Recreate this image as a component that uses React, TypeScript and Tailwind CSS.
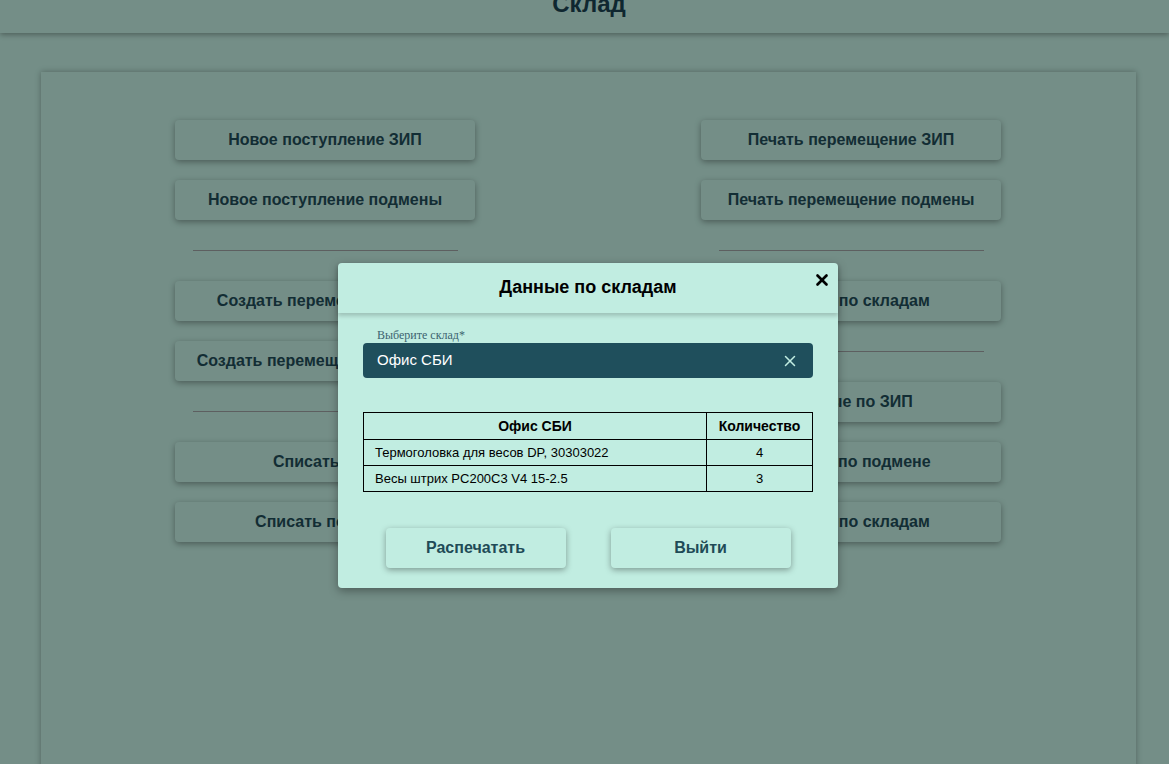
import { X } from 'lucide-react'

const font = { fontFamily: '"Liberation Sans", Arial, sans-serif' }

function MenuButton({ label }: { label: string }) {
  return (
    <button
      type="button"
      className="w-[300px] h-10 rounded-[4px] bg-[#c1ede1] shadow-[0_2px_6px_rgba(0,0,0,0.35)] text-[16px] font-bold text-[#1f4b57]"
    >
      {label}
    </button>
  )
}

function Divider() {
  return <div className="w-[265px] h-px bg-[#9b9fa0] mx-auto" />
}

const rows = [
  { name: 'Термоголовка для весов DP, 30303022', qty: 4 },
  { name: 'Весы штрих PC200C3 V4 15-2.5', qty: 3 },
]

export default function App() {
  return (
    <div className="relative h-[764px] overflow-hidden bg-[#c1ede1]" style={font}>
      {/* Header */}
      <div className="h-[33px] bg-[#c1ede1] shadow-[0_2px_5px_rgba(0,0,0,0.3)] relative z-10 flex justify-center pl-[9px]">
        <h1 className="-mt-[10px] text-[24px] leading-[28px] font-bold text-[#1a4250]">Склад</h1>
      </div>

      {/* Main card */}
      <div className="ml-[41px] mt-[39px] w-[1095px] h-[760px] bg-[#c1ede1] shadow-[0_0_6px_rgba(0,0,0,0.3)] pt-[48px] pl-[134px]">
        <div className="flex gap-[226px]">
          <div className="flex flex-col w-[300px]">
            <MenuButton label="Новое поступление ЗИП" />
            <div className="h-5" />
            <MenuButton label="Новое поступление подмены" />
            <div className="h-[30px]" />
            <Divider />
            <div className="h-[30px]" />
            <MenuButton label="Создать перемещение ЗИП" />
            <div className="h-5" />
            <MenuButton label="Создать перемещение подмены" />
            <div className="h-[30px]" />
            <Divider />
            <div className="h-[30px]" />
            <MenuButton label="Списать ЗИП" />
            <div className="h-5" />
            <MenuButton label="Списать подмену" />
          </div>
          <div className="flex flex-col w-[300px]">
            <MenuButton label="Печать перемещение ЗИП" />
            <div className="h-5" />
            <MenuButton label="Печать перемещение подмены" />
            <div className="h-[30px]" />
            <Divider />
            <div className="h-[30px]" />
            <MenuButton label="Данные по складам" />
            <div className="h-[30px]" />
            <Divider />
            <div className="h-[30px]" />
            <MenuButton label="Данные по ЗИП" />
            <div className="h-5" />
            <MenuButton label="Данные по подмене" />
            <div className="h-5" />
            <MenuButton label="Данные по складам" />
          </div>
        </div>
      </div>

      {/* Backdrop */}
      <div className="absolute inset-0 z-20 bg-black/40" />

      {/* Modal */}
      <div className="absolute z-30 left-[338px] top-[263px] w-[500px] rounded-[4px] bg-[#c1ede1] shadow-[0_3px_10px_rgba(0,0,0,0.35)] pb-5">
        <div className="relative h-[50px] flex items-center justify-center pb-px shadow-[0_3px_4px_rgba(0,0,0,0.18)]">
          <h2 className="text-[18px] font-bold text-black">Данные по складам</h2>
          <span className="absolute right-[7px] top-[8px]">
            <X size={18} strokeWidth={3.5} className="text-black" />
          </span>
        </div>

        <div className="px-[25px]">
          <div
            className="mt-[15px] pl-[14px] text-[12px] leading-[14px] text-[#3c6470]"
            style={{ fontFamily: '"Liberation Serif", "Times New Roman", serif' }}
          >
            Выберите склад*
          </div>
          <div className="mt-px h-[35px] rounded-[4px] bg-[#1f4f5c] flex items-center justify-between pl-[14px] pr-[14px]">
            <span className="text-[15px] text-white">Офис СБИ</span>
            <X size={18} strokeWidth={2} className="text-[#c1ede1]" />
          </div>

          <table className="mt-[34px] w-[450px] border-collapse text-black">
            <thead>
              <tr className="h-[27px]">
                <th className="border border-black text-[14px] font-bold w-[343px]">Офис СБИ</th>
                <th className="border border-black text-[14px] font-bold">Количество</th>
              </tr>
            </thead>
            <tbody>
              {rows.map((r) => (
                <tr key={r.name} className="h-[26px]">
                  <td className="border border-black text-[13px] pl-[11px]">{r.name}</td>
                  <td className="border border-black text-[13px] text-center">{r.qty}</td>
                </tr>
              ))}
            </tbody>
          </table>
        </div>

        <div className="mt-[36px] flex justify-center gap-[45px]">
          <button
            type="button"
            className="w-[180px] h-10 rounded-[4px] bg-[#c1ede1] shadow-[0_2px_6px_rgba(0,0,0,0.35)] text-[16px] font-bold text-[#1f4b57]"
          >
            Распечатать
          </button>
          <button
            type="button"
            className="w-[180px] h-10 rounded-[4px] bg-[#c1ede1] shadow-[0_2px_6px_rgba(0,0,0,0.35)] text-[16px] font-bold text-[#1f4b57]"
          >
            Выйти
          </button>
        </div>
      </div>
    </div>
  )
}
